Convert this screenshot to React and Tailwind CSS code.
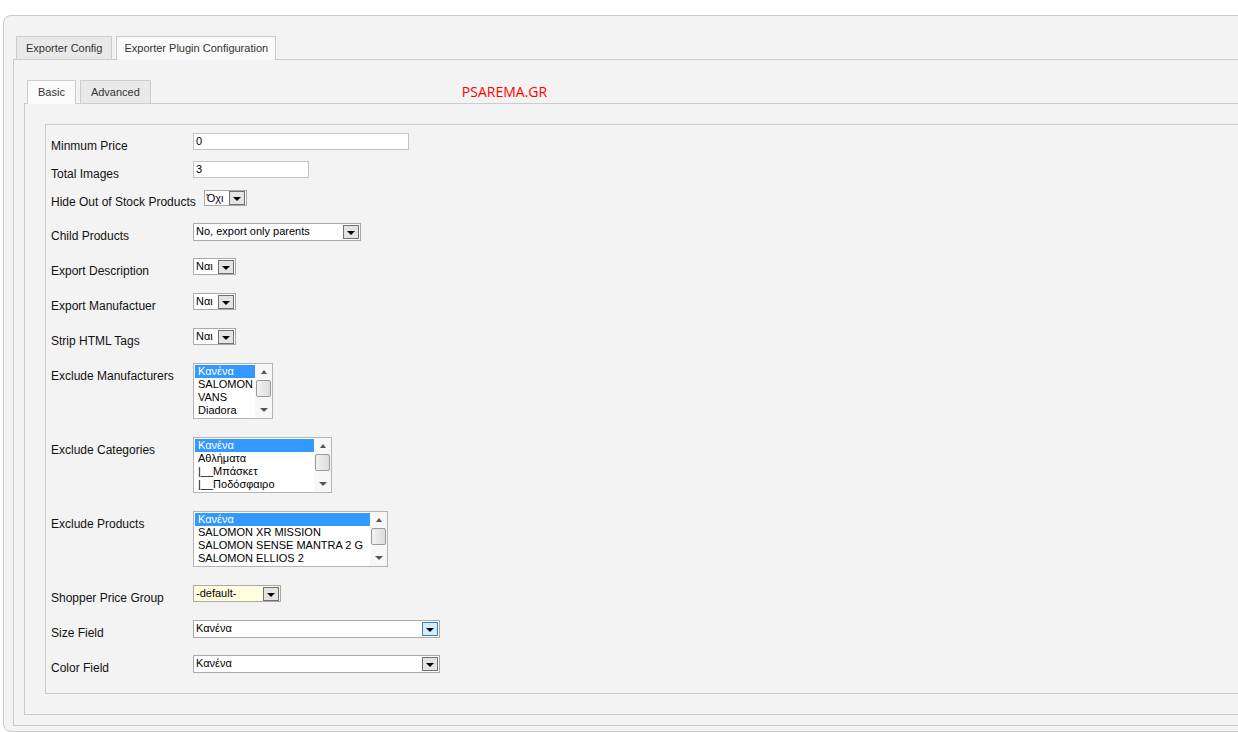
import React from "react";

const Caret = ({ color = "border-t-black" }) => (
    <span className={`block h-0 w-0 border-l-[4px] border-r-[4px] border-t-[4px] border-l-transparent border-r-transparent ${color}`} />
);

const DropButton = ({ blue }) => (
    <span
        className={
            "flex h-[14px] w-[16px] shrink-0 items-center justify-center border pt-[2px] " +
            (blue
                ? "border-[#3c7fb1] bg-[#d4ebfa]"
                : "border-[#707070] bg-[#e4e4e4]")
        }
    >
        <Caret />
    </span>
);

const Select = ({ width, height = "h-[17px]", value, yellow, blue }) => (
    <div
        className={`flex ${width} ${height} items-center border border-[#a9a9a9] ${yellow ? "bg-[#ffffe0]" : "bg-white"} pr-px`}
    >
        <span className="flex-1 self-start overflow-hidden whitespace-nowrap pl-[2px] pt-px text-[11px] leading-[13px] text-black">
            {value}
        </span>
        <DropButton blue={blue} />
    </div>
);

const ListBox = ({ width, items }) => (
    <div className={`flex ${width} h-[56px] border border-[#b4b4b4] bg-white`}>
        <div className="flex-1 overflow-hidden pl-px pt-px">
            {items.map((item, i) => (
                <div
                    key={item}
                    className={
                        "h-[13px] whitespace-nowrap px-[3px] text-[11px] leading-[13px] " +
                        (i === 0 ? "bg-[#3399ff] text-white" : "text-black")
                    }
                >
                    {item}
                </div>
            ))}
        </div>
        <div className="flex w-[17px] flex-col items-center bg-[#f7f7f7]">
            <div className="flex h-[16px] items-center justify-center">
                <span className="block h-0 w-0 border-b-[4px] border-l-[3px] border-r-[3px] border-b-[#555] border-l-transparent border-r-transparent" />
            </div>
            <div className="h-[17px] w-[15px] rounded-[2px] border border-[#999] bg-gradient-to-r from-[#f2f2f2] to-[#dcdcdc]" />
            <div className="flex-1" />
            <div className="flex h-[16px] items-center justify-center">
                <Caret color="border-t-[#555]" />
            </div>
        </div>
    </div>
);

const TextInput = ({ width, value }) => (
    <div className={`${width} h-[17px] border border-[#c4c4c4] bg-white pl-[2px] text-[11px] leading-[14px] text-black`}>
        {value}
    </div>
);

const rows = [
    { label: "Minmum Price", h: "h-[28px]", field: <TextInput width="w-[216px]" value="0" /> },
    { label: "Total Images", h: "h-[28px]", field: <TextInput width="w-[116px]" value="3" /> },
    {
        label: "Hide Out of Stock Products",
        h: "h-[34px]",
        field: (
            <div className="ml-[8px] mt-px">
                <Select width="w-[43px]" height="h-[16px]" value="Όχι" />
            </div>
        ),
    },
    { label: "Child Products", h: "h-[35px]", field: <Select width="w-[168px]" height="h-[18px]" value="No, export only parents" /> },
    { label: "Export Description", h: "h-[35px]", field: <Select width="w-[43px]" value="Ναι" /> },
    { label: "Export Manufactuer", h: "h-[35px]", field: <Select width="w-[43px]" value="Ναι" /> },
    { label: "Strip HTML Tags", h: "h-[35px]", field: <Select width="w-[43px]" value="Ναι" /> },
    {
        label: "Exclude Manufacturers",
        h: "h-[74px]",
        field: <ListBox width="w-[80px]" items={["Κανένα", "SALOMON", "VANS", "Diadora"]} />,
    },
    {
        label: "Exclude Categories",
        h: "h-[74px]",
        field: <ListBox width="w-[139px]" items={["Κανένα", "Αθλήματα", "|__Μπάσκετ", "|__Ποδόσφαιρο"]} />,
    },
    {
        label: "Exclude Products",
        h: "h-[74px]",
        field: (
            <ListBox
                width="w-[195px]"
                items={["Κανένα", "SALOMON XR MISSION", "SALOMON SENSE MANTRA 2 G", "SALOMON ELLIOS 2"]}
            />
        ),
    },
    { label: "Shopper Price Group", h: "h-[35px]", field: <Select width="w-[88px]" value="-default-" yellow /> },
    { label: "Size Field", h: "h-[35px]", field: <Select width="w-[247px]" height="h-[18px]" value="Κανένα" blue /> },
    { label: "Color Field", h: "h-[36px]", field: <Select width="w-[247px]" height="h-[18px]" value="Κανένα" /> },
];

export default function App() {
    return (
        <div className="h-[732px] w-full overflow-hidden bg-white pl-[3px] pt-[15px] font-['Liberation_Sans',Arial,sans-serif]">

            <div className="h-[717px] w-[1300px] rounded-l-[8px] border border-[#cccccc] bg-[#f3f3f3] pl-[9px] pt-[20px]">

                {/* outer tabs */}
                <div className="relative z-10 ml-[3px] flex items-start gap-[4px]">
                    <div className="flex h-[23px] items-center border border-b-0 border-[#cccccc] bg-[#e9e9e9] px-[9px] text-[11px] text-[#333]">
                        Exporter Config
                    </div>
                    <div className="-mb-px flex h-[24px] items-center border border-b-0 border-[#cccccc] bg-[#fafafa] px-[7px] text-[11px] text-[#333]">
                        Exporter Plugin Configuration
                    </div>
                </div>

                <div className="h-[667px] border border-r-0 border-[#cccccc] bg-[#f3f3f3] pb-[10px] pl-[10px] pt-[20px]">

                    {/* inner tabs */}
                    <div className="relative z-10 ml-[3px] flex items-start">
                        <div className="-mb-px flex h-[24px] items-center border border-b-0 border-[#cccccc] bg-[#fafafa] px-[10px] text-[11px] text-[#333]">
                            Basic
                        </div>
                        <div className="ml-[4px] flex h-[23px] items-center border border-b-0 border-[#cccccc] bg-[#e9e9e9] px-[10px] text-[11px] text-[#333]">
                            Advanced
                        </div>
                        <div className="ml-[311px] self-center font-['Open_Sans',sans-serif] text-[14px] text-[#ff0000]">
                            PSAREMA.GR
                        </div>
                    </div>

                    <div className="h-[612px] border border-r-0 border-[#cccccc] pb-[20px] pl-[20px] pt-[20px]">

                        <div className="h-[570px] border border-r-0 border-[#cccccc] pl-[5px] pt-[8px]">
                            {rows.map((row) => (
                                <div key={row.label} className={`flex items-start ${row.h}`}>
                                    <div className="min-w-[142px] whitespace-nowrap pt-[6px] text-[12px] leading-[14px] text-[#111]">
                                        {row.label}
                                    </div>
                                    {row.field}
                                </div>
                            ))}
                        </div>

                    </div>

                </div>

            </div>

        </div>
    );
}
